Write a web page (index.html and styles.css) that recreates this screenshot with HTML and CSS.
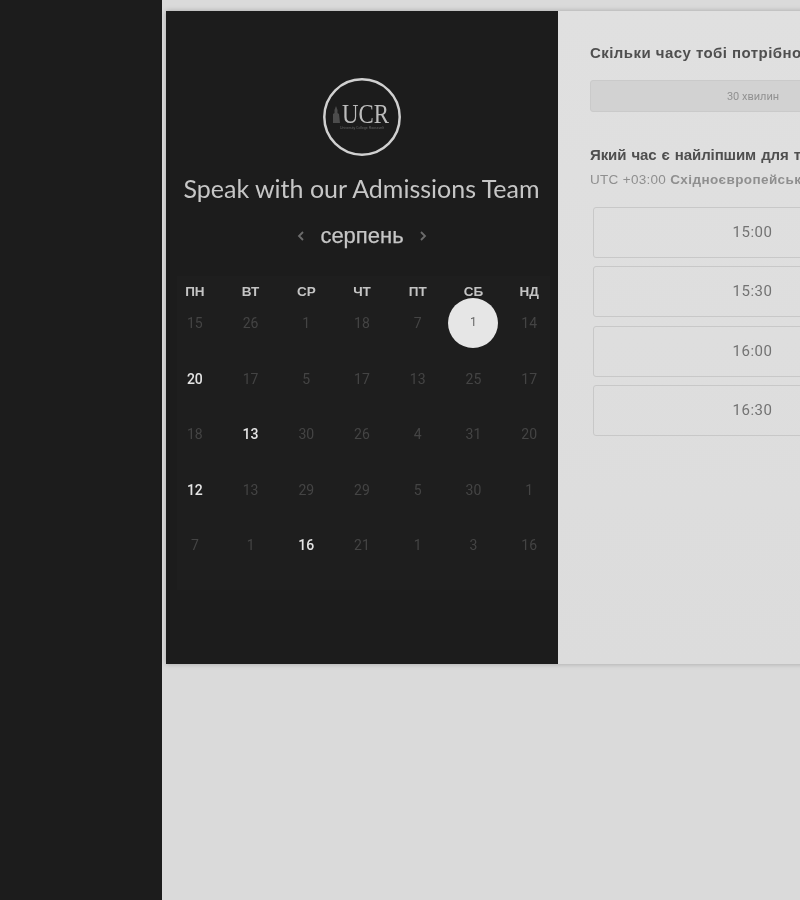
FILE: index.html
```html
<!DOCTYPE html>
<html lang="uk">
<head>
<meta charset="utf-8">
<title>Speak with our Admissions Team</title>
<link rel="stylesheet" href="styles.css">
</head>
<body>
<div class="app">
  <aside class="sidebar"></aside>
  <main class="main">
    <div class="card">
      <section class="left">
        <svg class="logo" width="80" height="80" viewBox="0 0 80 80" aria-label="UCR">
          <circle cx="40" cy="40" r="37.700" fill="none" stroke="#d0d0d0" stroke-width="2.500"/>
          <path d="M11 46V37l1.500-1v-3l1.500-4 1.500 4v3l1.500 1 1 9z" fill="#4c4c4c"/>
          <text x="20" y="46" class="logo-main" textLength="47" lengthAdjust="spacingAndGlyphs">UCR</text>
          <text x="40" y="52" class="logo-sub" textLength="44" lengthAdjust="spacingAndGlyphs">University College Roosevelt</text>
        </svg>
        <h1 class="title">Speak with our Admissions Team</h1>
        <div class="month">
          <svg class="chev" width="8" height="12" viewBox="0 0 8 12"><path d="M6 2 2 6l4 4" fill="none" stroke="#6c6c6c" stroke-width="1.800"/></svg>
          <span class="month-name">серпень</span>
          <svg class="chev" width="8" height="12" viewBox="0 0 8 12"><path d="M2 2l4 4-4 4" fill="none" stroke="#6c6c6c" stroke-width="1.800"/></svg>
        </div>
        <div class="calendar">
          <div class="weekdays">
            <span>ПН</span><span>ВТ</span><span>СР</span><span>ЧТ</span><span>ПТ</span><span>СБ</span><span>НД</span>
          </div>
          <div class="days">
            <span>15</span><span>26</span><span>1</span><span>18</span><span>7</span><span class="selected"><b>1</b></span><span>14</span>
            <span class="on">20</span><span>17</span><span>5</span><span>17</span><span>13</span><span>25</span><span>17</span>
            <span>18</span><span class="on">13</span><span>30</span><span>26</span><span>4</span><span>31</span><span>20</span>
            <span class="on">12</span><span>13</span><span>29</span><span>29</span><span>5</span><span>30</span><span>1</span>
            <span>7</span><span>1</span><span class="on">16</span><span>21</span><span>1</span><span>3</span><span>16</span>
          </div>
        </div>
      </section>
      <section class="right">
        <h2 class="q first">Скільки часу тобі потрібно?</h2>
        <div class="duration">30 хвилин</div>
        <h2 class="q second">Який час є найліпшим для тебе?</h2>
        <p class="tz">UTC +03:00 <span class="tz-name">Східноєвропейський час</span></p>
        <div class="slots">
          <div class="slot">15:00</div>
          <div class="slot">15:30</div>
          <div class="slot">16:00</div>
          <div class="slot">16:30</div>
        </div>
      </section>
    </div>
  </main>
</div>
</body>
</html>
```
FILE: styles.css
```css
* { box-sizing: border-box; }
html, body { margin: 0; height: 100%; }
body { overflow: hidden; background: #dadada; font-family: "Liberation Sans", Arial, sans-serif; }
.app { display: flex; width: 800px; height: 900px; overflow: hidden; filter: blur(.4px); }
.sidebar { flex: 0 0 162px; background: #1c1c1c; }
.main { flex: 1 0 0; min-width: 0; padding: 11px 0 0 4px; background: #dadada; }
.card { display: flex; width: 782px; height: 653px; box-shadow: 0 0 5px rgba(0,0,0,.25); }
.left { flex: 0 0 392px; display: flex; flex-direction: column; align-items: center; padding-top: 66px; background: #1c1c1c; }
.logo { display: block; margin-left: -1px; }
.logo-main { font: 27px "Liberation Serif", serif; fill: #bdbdbd; }
.logo-sub { font: 3px "Liberation Sans", sans-serif; fill: #666; text-anchor: middle; }
.title { margin: 15px 1px 0 0; font: 400 25px/32px Lato, sans-serif; color: #c6c6c6; white-space: nowrap; }
.month { display: flex; align-items: center; gap: 15px; height: 30px; margin-top: 17px; }
.month-name { font-size: 22px; color: #c6c6c6; -webkit-text-stroke: .25px #c6c6c6; }
.calendar { align-self: stretch; height: 314px; margin-top: 25px; padding: 0 1px; background: linear-gradient(#1e1e1e, #1e1e1e) no-repeat 11px 0 / 373px 100%; }
.weekdays, .days { display: grid; grid-template-columns: repeat(7, 1fr); text-align: center; }
.weekdays { height: 30px; align-items: center; font-size: 13.500px; font-weight: 700; color: #c4c4c4; }
.days { grid-auto-rows: 55.500px; margin-top: -8px; font: 14px/50px Roboto, sans-serif; color: #444; }
.days span { display: block; }
.days .on { color: #e4e4e4; font-weight: 500; }
.days .selected { position: relative; }
.days .selected b { position: absolute; left: 50%; top: 0; width: 50px; height: 50px; margin-left: -25px; border-radius: 50%; background: #e6e6e6; color: #666; font-size: 12px; font-weight: 400; line-height: 48px; }
.right { flex: 1 0 0; padding: 32px 32px 0; background: linear-gradient(#e0e0e0, #dcdcdc); }
.q { margin: 0; font-size: 15px; line-height: 20px; font-weight: 700; color: #4f4f4f; white-space: nowrap; }
.first { letter-spacing: .45px; }
.second { margin-top: 33px; letter-spacing: -.1px; word-spacing: 1px; }
.duration { height: 32px; margin-top: 17px; border: 1px solid #cacaca; border-radius: 3px; background: #d2d2d2; color: #919191; font: 11px/31px Roboto, sans-serif; text-align: center; }
.tz { margin: 7px 0 0; font-size: 13.500px; line-height: 16px; letter-spacing: .3px; color: #8f8f8f; white-space: nowrap; }
.tz-name { font-weight: 700; letter-spacing: .4px; }
.slots { display: flex; flex-direction: column; gap: 8.500px; margin: 18.500px 4px 0 3px; }
.slot { height: 51px; border: 1px solid #c8c8c8; border-radius: 3px; font: 15px/49px Roboto, sans-serif; letter-spacing: .5px; color: #737373; text-align: center; }
```
